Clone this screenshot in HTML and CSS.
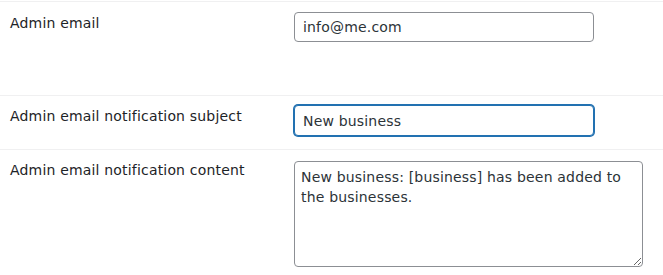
FILE: index.html
```html
<!DOCTYPE html>
<html lang="en">
<head>
    <meta charset="UTF-8">
    <meta name="viewport" content="width=device-width, initial-scale=1.0">
    <title>Email settings</title>
    <link rel="stylesheet" href="styles.css">
</head>
<body>

<div class="form-table">
    <div class="row row-tall">
        <label class="label" for="admin-email">Admin email</label>
        <div class="field">
            <input class="text-input" id="admin-email" type="text" value="info@me.com">
        </div>
    </div>
    <div class="row">
        <label class="label" for="admin-subject">Admin email notification subject</label>
        <div class="field">
            <input class="text-input focused" id="admin-subject" type="text" value="New business">
        </div>
    </div>
    <div class="row">
        <label class="label" for="admin-content">Admin email notification content</label>
        <div class="field">
            <textarea class="text-area" id="admin-content">New business: [business] has been added to the businesses.</textarea>
        </div>
    </div>
</div>

</body>
</html>
```

FILE: styles.css
```css
body {
    margin: 0;
    background-color: #fff;
    font-family: "DejaVu Sans", Verdana, sans-serif;
    font-size: 14px;
    letter-spacing: 0.18px;
    color: #1d2327;
}
.form-table {
    padding-top: 1px;
}
.row {
    display: grid;
    grid-template-columns: 284px 1fr;
    border-top: 1px solid #f0f0f1;
    padding: 9px 0 13px;
}
.row-tall {
    min-height: 70px;
    padding-top: 10px;
}
.label {
    padding: 1px 0 0 10px;
    line-height: 20px;
}
.field {
    padding-left: 10px;
}
.text-input {
    box-sizing: border-box;
    width: 300px;
    height: 30px;
    padding: 0 8px;
    border: 1px solid #8c8f94;
    border-radius: 4px;
    font-family: inherit;
    font-size: 14px;
    letter-spacing: inherit;
    color: #2c3338;
    background: #fff;
    outline: none;
}
.text-input.focused {
    height: 31px;
    border-color: #2271b1;
    box-shadow: 0 0 0 1px #2271b1;
}
.text-area {
    display: block;
    box-sizing: border-box;
    width: 349px;
    height: 106px;
    margin-top: 2px;
    padding: 5px 6px;
    border: 1px solid #8c8f94;
    border-radius: 4px;
    font-family: inherit;
    font-size: 14px;
    letter-spacing: inherit;
    line-height: 20px;
    color: #2c3338;
    background: #fff;
    outline: none;
}
```
